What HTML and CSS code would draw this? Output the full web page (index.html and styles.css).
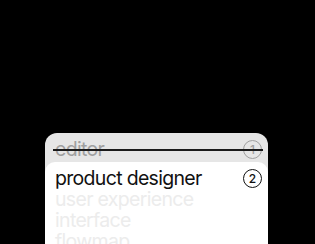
FILE: index.html
```html
<!DOCTYPE html>
<html lang="en">
<head>
    <meta charset="UTF-8">
    <meta name="viewport" content="width=device-width, initial-scale=1.0">
    <title>Roles</title>
    <link rel="stylesheet" href="styles.css">
</head>
<body>
    <div class="card">
        <div class="row row-done">
            <span class="label">editor</span>
            <span class="num">1</span>
        </div>
        <div class="panel">
            <div class="row row-active">
                <span class="label">product designer</span>
                <span class="num">2</span>
            </div>
            <div class="row row-next"><span class="label">user experience</span></div>
            <div class="row row-next"><span class="label">interface</span></div>
            <div class="row row-next"><span class="label">flowmap</span></div>
        </div>
    </div>
</body>
</html>
```

FILE: styles.css
```css
html, body {
    margin: 0;
    padding: 0;
    height: 100%;
    overflow: hidden;
}
body {
    background-color: #000;
    font-family: Inter, "Noto Sans", sans-serif;
    padding: 133px 0 0 45px;
    box-sizing: border-box;
}
.card {
    width: 223px;
    background-color: #e6e6e6;
    border-radius: 12px 12px 0 0;
}
.row {
    display: flex;
    justify-content: space-between;
    align-items: center;
    padding: 0 6px 0 10px;
    font-size: 19.5px;
    letter-spacing: -0.035em;
    line-height: 21px;
}
.row-done {
    position: relative;
    height: 29px;
    color: #a0a0a0;
}
.row-done::after {
    content: "";
    position: absolute;
    left: 8px;
    right: 5px;
    top: 16px;
    height: 2px;
    background-color: #1a1a1a;
}
.row-done .label {
    margin-top: 4px;
}
.panel {
    background-color: #fff;
    border-radius: 10px 10px 0 0;
    padding-top: 6px;
}
.row-active {
    color: #111;
}
.row-next {
    color: #ececec;
}
.num {
    width: 17px;
    height: 17px;
    border: 1.3px solid currentColor;
    border-radius: 50%;
    font-size: 12px;
    line-height: 17px;
    text-align: center;
    letter-spacing: 0;
    font-weight: 500;
}
.row-done .num {
    margin-top: 4px;
}
```
